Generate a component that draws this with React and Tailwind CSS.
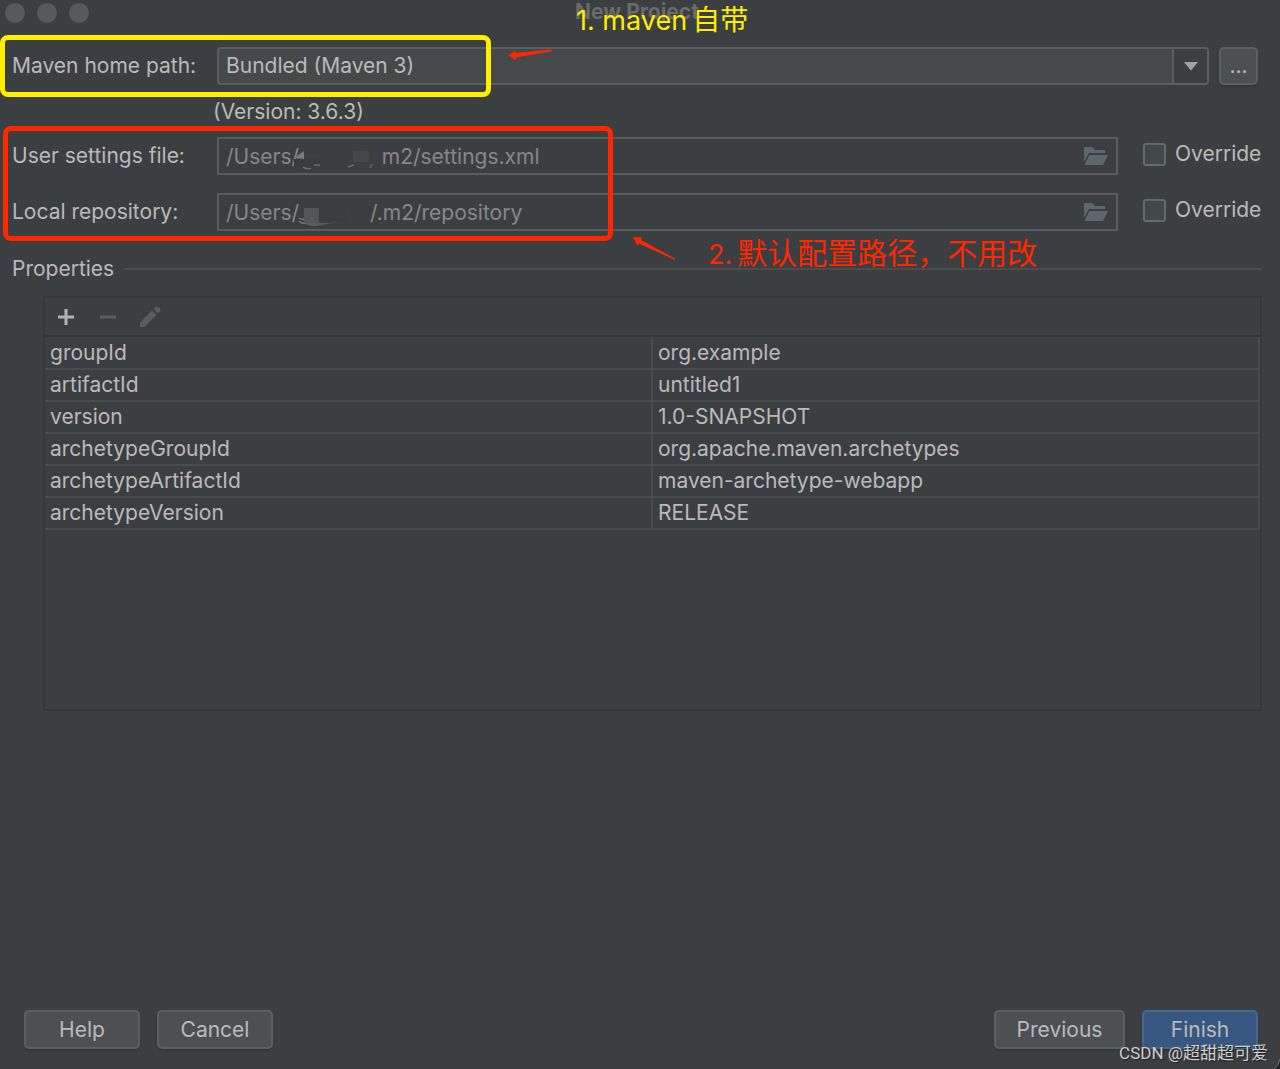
import { useState } from 'react';

const properties = [
  { name: 'groupId', value: 'org.example' },
  { name: 'artifactId', value: 'untitled1' },
  { name: 'version', value: '1.0-SNAPSHOT' },
  { name: 'archetypeGroupId', value: 'org.apache.maven.archetypes' },
  { name: 'archetypeArtifactId', value: 'maven-archetype-webapp' },
  { name: 'archetypeVersion', value: 'RELEASE' },
];

const FolderIcon = () => (
  <svg viewBox="0 0 24 18" className="h-[18px] w-6" fill="#5f676b">
    <path d="M0 0h8l3 3h10v3H5L0 15z" />
    <path d="M5.500 8H24l-5 10H0.500z" />
  </svg>
);

const Smudge = ({ children }) => (
  <svg viewBox="0 0 92 32" className="pointer-events-none absolute top-1 left-[72px] h-8 w-[92px]">
    {children}
  </svg>
);

const PathField = ({ id, label, value, smudge }) => {
  const [override, setOverride] = useState(false);

  return (
    <div className="flex items-center">
      <label htmlFor={id} className="w-[205px] shrink-0">{label}</label>
      <div className="relative flex h-[38px] flex-1 items-center border-2 border-[#5a5c5e] pr-2">
        <input
          id={id}
          type="text"
          readOnly={!override}
          defaultValue={value}
          className="h-full min-w-0 flex-1 bg-transparent px-[7px] text-[#868888] outline-none"
        />
        {smudge}
        <button type="button" aria-label={`Browse ${label}`}>
          <FolderIcon />
        </button>
      </div>
      <label className="ml-[25px] flex w-[119px] shrink-0 items-center gap-[9px] pb-1">
        <input
          type="checkbox"
          checked={override}
          onChange={() => setOverride(!override)}
          className="h-[23px] w-[23px] appearance-none rounded-[3px] border-2 border-[#66696a] bg-[#43494b] checked:bg-[#365880]"
        />
        Override
      </label>
    </div>
  );
};

const DialogButton = ({ children, className }) => (
  <button
    type="button"
    className={`h-[39px] rounded-[5px] border-2 shadow-[0_2px_2px_rgba(0,0,0,0.15)] ${className}`}
  >
    {children}
  </button>
);

const App = () => {
  return (
    <div className="relative flex min-h-screen flex-col overflow-hidden bg-[#3c3f41] font-['Inter','Noto_Sans_CJK_SC',sans-serif] text-[21px] leading-6 text-[#bababa]">
      {/* Title bar */}
      <header className="relative flex h-[26px] items-center gap-3 px-[5px]">
        <span className="h-5 w-5 rounded-full bg-[#58595b]" />
        <span className="h-5 w-5 rounded-full bg-[#58595b]" />
        <span className="h-5 w-5 rounded-full bg-[#58595b]" />
        <h1 className="absolute inset-x-0 top-0 pr-[6px] text-center font-bold text-[#696b6d]">New Project</h1>
        <p className="absolute top-1 left-[45%] z-10 flex items-baseline gap-[5px] text-[27px] leading-8 whitespace-nowrap text-[#ffee00]">
          <span>1. maven</span>
          <span className="text-[28px]">自带</span>
        </p>
      </header>

      {/* Maven home */}
      <section className="relative mt-[21px] flex items-center pr-[22px] pl-3">
        <label htmlFor="maven-home" className="w-[205px] shrink-0">Maven home path:</label>
        <div className="relative flex-1">
          <select
            id="maven-home"
            className="block h-[38px] w-full appearance-none rounded-[4px] border-2 border-[#5c5e60] bg-[#45494a] px-[7px] outline-none"
          >
            <option>Bundled (Maven 3)</option>
          </select>
          <span className="pointer-events-none absolute inset-y-[2px] right-[2px] flex w-[35px] items-center justify-center rounded-r-[2px] border-l-2 border-[#5c5e60] bg-[#3c3f41]">
            <svg viewBox="0 0 14 9" className="h-[9px] w-[14px]" fill="#a0a3a5">
              <path d="M0 0h14L7 8.500z" />
            </svg>
          </span>
        </div>
        <button
          type="button"
          aria-label="Choose Maven home"
          className="ml-[10px] h-[38px] w-[39px] rounded-[5px] border-2 border-[#5c6060] bg-[#4c5053] shadow-[0_2px_2px_rgba(0,0,0,0.15)]"
        >
          ...
        </button>
        <div className="pointer-events-none absolute -top-3 left-0 h-[62px] w-[491px] rounded-[8px] border-[5px] border-[#ffee00]" />
        <svg viewBox="0 0 44 12" className="pointer-events-none absolute top-[1px] left-[508px] h-3 w-11" fill="#ff2600">
          <path d="M0 7.500L8 2.500L7.500 5L43 1.500Q45 2.500 43 3.500L7.500 9.500L8 12z" />
        </svg>
      </section>
      <p className="mt-[15px] ml-[213px]">(Version: 3.6.3)</p>

      {/* Settings and repository paths */}
      <section className="relative mt-[13px] flex flex-col gap-[18px] pr-[18px] pl-3">
        <PathField
          id="user-settings"
          label="User settings file:"
          value={'/Users/' + '\u00a0'.repeat(14) + 'm2/settings.xml'}
          smudge={
            <Smudge>
              <path d="M8 10h80v16H8z" fill="#3c3f41" />
              <path d="M3 16h26v8H3z" fill="#393c3f" />
              <path d="M3 15L13 8v8z" fill="#777b7e" />
              <path d="M62 8h16v11H62z" fill="#45484b" />
              <path d="M12 24q5 3 8 1M23 22h6M57 24l6-2M79 25l2-4" stroke="#6b6d6e" strokeWidth="1.500" fill="none" />
            </Smudge>
          }
        />
        <PathField
          id="local-repository"
          label="Local repository:"
          value={'/Users/' + '\u00a0'.repeat(12) + '/.m2/repository'}
          smudge={
            <Smudge>
              <path d="M28 9h26v14H28z" fill="#3a3c3f" />
              <path d="M8 19q3 2 5 1M8 22q4 4 9 1" stroke="#77797a" strokeWidth="1.500" fill="none" />
              <path d="M13 9h15v15H13z" fill="#535557" />
              <path d="M14 24h24l11-1q-15 2-23 4q-8 1-12-3z" fill="#5a5c5f" />
            </Smudge>
          }
        />
        <div className="pointer-events-none absolute -top-[11px] left-[3px] h-[115px] w-[610px] rounded-[8px] border-[5px] border-[#ff2600]" />
        <svg viewBox="0 0 44 24" className="pointer-events-none absolute top-[100px] left-[633px] h-6 w-11" fill="#ff2600">
          <path d="M0 0L9 0.500L8 3L42 21.500Q43 23 41 22.500L6 6.500L4.500 9z" />
        </svg>
        <p className="absolute top-[100px] left-[708px] z-10 flex items-baseline gap-[5px] text-[27px] leading-8 whitespace-nowrap text-[#ff2600]">
          <span>2.</span>
          <span className="text-[30px]">默认配置路径，不用改</span>
        </p>
      </section>

      {/* Properties */}
      <div className="mt-[26px] flex items-center gap-[10px] pr-[18px] pl-3">
        <h2>Properties</h2>
        <div className="h-[2px] flex-1 bg-[#4b4d4f]" />
      </div>
      <section className="mt-[15px] mr-[18px] ml-[43px] h-[415px] border-2 border-[#353739]">
        <div className="flex h-[39px] items-center gap-[18px] border-b-2 border-[#353739] pl-[9px]">
          <button type="button" aria-label="Add">
            <svg viewBox="0 0 24 24" className="h-6 w-6" fill="#afb1b3">
              <path d="M10.500 4h3v6.500H20v3h-6.500V20h-3v-6.500H4v-3h6.500z" />
            </svg>
          </button>
          <button type="button" aria-label="Remove">
            <svg viewBox="0 0 24 24" className="h-6 w-6" fill="#5a5c5e">
              <path d="M4 10.500h16v3H4z" />
            </svg>
          </button>
          <button type="button" aria-label="Edit">
            <svg viewBox="0 0 24 24" className="h-6 w-6" fill="#5a5c5e">
              <path d="M2 17.500L14 5.500l4.500 4.500L6.500 22H2z" />
              <path d="M15.500 4L17.500 2q1.500-1 3 0L22 3.500q1 1.500 0 3L20 8.500z" />
            </svg>
          </button>
        </div>
        <table className="w-full table-fixed border-collapse">
          <tbody>
            {properties.map((property) => (
              <tr key={property.name} className="h-8 border-b-2 border-[#494c4e]">
                <td className="border-r-2 border-[#494c4e] px-[5px]">{property.name}</td>
                <td className="border-r-2 border-[#494c4e] px-[5px]">{property.value}</td>
              </tr>
            ))}
          </tbody>
        </table>
      </section>

      {/* Footer */}
      <footer className="mt-auto flex items-center justify-between pr-[22px] pb-5 pl-6">
        <div className="flex gap-[17px]">
          <DialogButton className="w-[116px] border-[#5c6060] bg-[#4c5053]">Help</DialogButton>
          <DialogButton className="w-[116px] border-[#5c6060] bg-[#4c5053]">Cancel</DialogButton>
        </div>
        <div className="flex gap-[17px]">
          <DialogButton className="w-[131px] border-[#5c6060] bg-[#4c5053]">Previous</DialogButton>
          <DialogButton className="w-[116px] border-[#43698e] bg-[#365880]">Finish</DialogButton>
        </div>
      </footer>
      <p className="absolute right-3 bottom-1 font-['Roboto','Noto_Sans_CJK_SC',sans-serif] text-[17px] leading-6 text-[#cfcfcf] [text-shadow:1px_1px_1px_#222]">
        CSDN @超甜超可爱
      </p>
      <svg viewBox="0 0 8 12" className="absolute right-0 bottom-0 h-3 w-2">
        <path d="M8 2Q7 8 2 12H8z" fill="#222426" />
        <path d="M8 2Q7 8 2 12" stroke="#717375" fill="none" />
      </svg>
    </div>
  );
};

export default App;
